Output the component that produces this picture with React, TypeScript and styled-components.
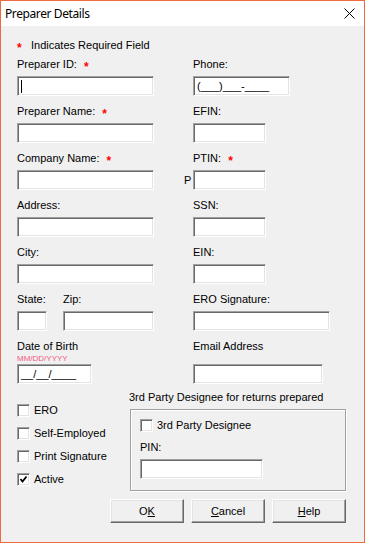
import React from 'react'
import styled, { createGlobalStyle } from 'styled-components'

const GlobalStyle = createGlobalStyle`
  html, body {
    margin: 0;
    padding: 0;
    background: #f0f0f0;
  }
`

const Window = styled.div`
  width: 365px;
  height: 543px;
  box-sizing: border-box;
  border: 1px solid #ee6a40;
  background: #f0f0f0;
  display: flex;
  flex-direction: column;
  font-family: "Liberation Sans", Arial, sans-serif;
  font-size: 11px;
  color: #000;
`
const TitleBar = styled.div`
  height: 25px;
  background: #fff;
  display: flex;
  align-items: center;
  justify-content: space-between;
  padding: 0 9px 0 4px;
`
const Title = styled.span`
  font-family: "Noto Sans", "Open Sans", sans-serif;
  font-size: 12px;
  letter-spacing: -0.4px;
`
const CloseButton = styled.span`
  display: flex;
  width: 11px;
  height: 11px;
`
const Body = styled.div`
  padding: 12px 0 0 16px;
  display: flex;
  flex-direction: column;
`
const Note = styled.div`
  height: 14px;
  line-height: 14px;
  margin-bottom: 5px;
  white-space: nowrap;
`
const Star = styled.span<{ $lead?: boolean }>`
  display: inline-block;
  color: #f00;
  font-weight: bold;
  font-size: 12px;
  line-height: 14px;
  vertical-align: top;
  padding-top: 3px;
  width: ${p => (p.$lead ? '14px' : 'auto')};
  margin-left: ${p => (p.$lead ? '0' : '7px')};
`
const FormGrid = styled.div`
  display: grid;
  grid-template-columns: 164px 1fr;
  row-gap: 8px;
`
const Field = styled.div`
  display: flex;
  flex-direction: column;
  justify-content: space-between;
`
const Pair = styled.div`
  display: flex;
  gap: 16px;
`
const Label = styled.div<{ $indent?: boolean }>`
  height: 14px;
  line-height: 14px;
  margin-bottom: 5px;
  white-space: nowrap;
  padding-left: ${p => (p.$indent ? '12px' : '0')};
`
const Hint = styled.div`
  font-size: 8px;
  height: 11px;
  line-height: 11px;
  margin-top: -5px;
  color: #f35a84;
`
const InputRow = styled.div`
  display: flex;
  align-items: center;
`
const Prefix = styled.span`
  width: 12px;
  box-sizing: border-box;
  padding-left: 3px;
`
const TextBox = styled.div<{ $w: number }>`
  width: ${p => p.$w}px;
  height: 20px;
  box-sizing: border-box;
  background: #fff;
  border: 1px solid;
  border-color: #a0a0a0 #fff #fff #a0a0a0;
  box-shadow: inset 1px 1px 0 #696969, inset -1px -1px 0 #e3e3e3;
  padding: 0 3px;
  display: flex;
  align-items: center;
  font-size: 11px;
  white-space: pre;
`
const Caret = styled.span`
  display: inline-block;
  width: 1px;
  height: 13px;
  background: #000;
`
const Lower = styled.div`
  display: flex;
  margin-top: 6px;
`
const Checks = styled.div`
  width: 112px;
  padding-top: 13px;
  display: flex;
  flex-direction: column;
  gap: 9px;
`
const CheckRow = styled.label`
  display: flex;
  align-items: center;
  gap: 4px;
  height: 14px;
  white-space: nowrap;
`
const CheckBox = styled.span`
  width: 13px;
  height: 13px;
  box-sizing: border-box;
  background: #fff;
  border: 1px solid;
  border-color: #a0a0a0 #fff #fff #a0a0a0;
  box-shadow: inset 1px 1px 0 #696969, inset -1px -1px 0 #e3e3e3;
  display: flex;
  align-items: center;
  justify-content: center;
`
const GroupWrap = styled.div`
  display: flex;
  flex-direction: column;
  gap: 5px;
`
const GroupLabel = styled.div`
  height: 14px;
  line-height: 14px;
  white-space: nowrap;
`
const GroupBox = styled.div`
  width: 216px;
  height: 82px;
  margin-left: 1px;
  box-sizing: border-box;
  border: 1px solid #a0a0a0;
  box-shadow: inset 1px 1px 0 #fff, 1px 1px 0 #fff;
  padding: 8px 0 0 9px;
  display: flex;
  flex-direction: column;
`
const PinLabel = styled.div`
  height: 14px;
  line-height: 14px;
  margin: 8px 0 5px;
`
const Buttons = styled.div`
  display: flex;
  gap: 7px;
  margin-top: 8px;
  padding-left: 93px;
`
const Button = styled.button`
  width: 74px;
  height: 24px;
  box-sizing: border-box;
  background: #f0f0f0;
  border: 1px solid;
  border-color: #fff #696969 #696969 #fff;
  box-shadow: inset -1px -1px 0 #a0a0a0, inset 1px 1px 0 #e3e3e3;
  font-family: inherit;
  font-size: 11px;
  color: #000;
  padding: 0;
  u {
    text-underline-offset: 1px;
  }
`

function Check({ label, checked }: { label: string; checked?: boolean }) {
  return (
    <CheckRow>
      <CheckBox>
        {checked && (
          <svg width="9" height="9" viewBox="0 0 9 9">
            <path d="M1.5 4 L3.5 6.5 L7.5 1.5" fill="none" stroke="#000" strokeWidth="1.8" />
          </svg>
        )}
      </CheckBox>
      {label}
    </CheckRow>
  )
}

export default function App() {
  return (
    <Window>
      <GlobalStyle />
      <TitleBar>
        <Title>Preparer Details</Title>
        <CloseButton>
          <svg width="11" height="11" viewBox="0 0 11 11">
            <path d="M0.5 0.5 L10.5 10.5 M10.5 0.5 L0.5 10.5" stroke="#000" strokeWidth="1" />
          </svg>
        </CloseButton>
      </TitleBar>
      <Body>
        <Note><Star $lead>*</Star>Indicates Required Field</Note>
        <FormGrid>
          <Field>
            <Label>Preparer ID:<Star>*</Star></Label>
            <TextBox $w={137}><Caret /></TextBox>
          </Field>
          <Field>
            <Label $indent>Phone:</Label>
            <InputRow><Prefix /><TextBox $w={97}>(___)___-____</TextBox></InputRow>
          </Field>

          <Field>
            <Label>Preparer Name:<Star>*</Star></Label>
            <TextBox $w={137} />
          </Field>
          <Field>
            <Label $indent>EFIN:</Label>
            <InputRow><Prefix /><TextBox $w={73} /></InputRow>
          </Field>

          <Field>
            <Label>Company Name:<Star>*</Star></Label>
            <TextBox $w={137} />
          </Field>
          <Field>
            <Label $indent>PTIN:<Star>*</Star></Label>
            <InputRow><Prefix>P</Prefix><TextBox $w={73} /></InputRow>
          </Field>

          <Field>
            <Label>Address:</Label>
            <TextBox $w={137} />
          </Field>
          <Field>
            <Label $indent>SSN:</Label>
            <InputRow><Prefix /><TextBox $w={73} /></InputRow>
          </Field>

          <Field>
            <Label>City:</Label>
            <TextBox $w={137} />
          </Field>
          <Field>
            <Label $indent>EIN:</Label>
            <InputRow><Prefix /><TextBox $w={73} /></InputRow>
          </Field>

          <Pair>
            <Field>
              <Label>State:</Label>
              <TextBox $w={30} />
            </Field>
            <Field>
              <Label>Zip:</Label>
              <TextBox $w={91} />
            </Field>
          </Pair>
          <Field>
            <Label $indent>ERO Signature:</Label>
            <InputRow><Prefix /><TextBox $w={137} /></InputRow>
          </Field>

          <Field>
            <div>
              <Label>Date of Birth</Label>
              <Hint>MM/DD/YYYY</Hint>
            </div>
            <TextBox $w={75}>__/__/____</TextBox>
          </Field>
          <Field>
            <Label $indent>Email Address</Label>
            <InputRow><Prefix /><TextBox $w={130} /></InputRow>
          </Field>
        </FormGrid>

        <Lower>
          <Checks>
            <Check label="ERO" />
            <Check label="Self-Employed" />
            <Check label="Print Signature" />
            <Check label="Active" checked />
          </Checks>
          <GroupWrap>
            <GroupLabel>3rd Party Designee for returns prepared</GroupLabel>
            <GroupBox>
              <Check label="3rd Party Designee" />
              <PinLabel>PIN:</PinLabel>
              <TextBox $w={123} />
            </GroupBox>
          </GroupWrap>
        </Lower>

        <Buttons>
          <Button>O<u>K</u></Button>
          <Button><u>C</u>ancel</Button>
          <Button><u>H</u>elp</Button>
        </Buttons>
      </Body>
    </Window>
  )
}
